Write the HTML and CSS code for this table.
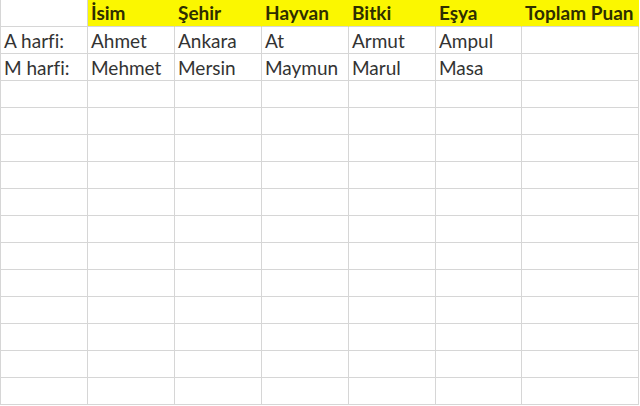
FILE: index.html
```html
<!DOCTYPE html>
<html lang="tr">
<head>
<meta charset="utf-8">
<link rel="stylesheet" href="styles.css">
</head>
<body>
<div class="sheet">
  <div class="cell"></div>
  <div class="cell head">İsim</div>
  <div class="cell head">Şehir</div>
  <div class="cell head">Hayvan</div>
  <div class="cell head">Bitki</div>
  <div class="cell head">Eşya</div>
  <div class="cell head">Toplam Puan</div>

  <div class="cell">A harfi:</div>
  <div class="cell">Ahmet</div>
  <div class="cell">Ankara</div>
  <div class="cell">At</div>
  <div class="cell">Armut</div>
  <div class="cell">Ampul</div>
  <div class="cell"></div>

  <div class="cell">M harfi:</div>
  <div class="cell">Mehmet</div>
  <div class="cell">Mersin</div>
  <div class="cell">Maymun</div>
  <div class="cell">Marul</div>
  <div class="cell">Masa</div>
  <div class="cell"></div>

  <div class="cell"></div><div class="cell"></div><div class="cell"></div><div class="cell"></div><div class="cell"></div><div class="cell"></div><div class="cell"></div>
  <div class="cell"></div><div class="cell"></div><div class="cell"></div><div class="cell"></div><div class="cell"></div><div class="cell"></div><div class="cell"></div>
  <div class="cell"></div><div class="cell"></div><div class="cell"></div><div class="cell"></div><div class="cell"></div><div class="cell"></div><div class="cell"></div>
  <div class="cell"></div><div class="cell"></div><div class="cell"></div><div class="cell"></div><div class="cell"></div><div class="cell"></div><div class="cell"></div>
  <div class="cell"></div><div class="cell"></div><div class="cell"></div><div class="cell"></div><div class="cell"></div><div class="cell"></div><div class="cell"></div>
  <div class="cell"></div><div class="cell"></div><div class="cell"></div><div class="cell"></div><div class="cell"></div><div class="cell"></div><div class="cell"></div>
  <div class="cell"></div><div class="cell"></div><div class="cell"></div><div class="cell"></div><div class="cell"></div><div class="cell"></div><div class="cell"></div>
  <div class="cell"></div><div class="cell"></div><div class="cell"></div><div class="cell"></div><div class="cell"></div><div class="cell"></div><div class="cell"></div>
  <div class="cell"></div><div class="cell"></div><div class="cell"></div><div class="cell"></div><div class="cell"></div><div class="cell"></div><div class="cell"></div>
  <div class="cell"></div><div class="cell"></div><div class="cell"></div><div class="cell"></div><div class="cell"></div><div class="cell"></div><div class="cell"></div>
  <div class="cell"></div><div class="cell"></div><div class="cell"></div><div class="cell"></div><div class="cell"></div><div class="cell"></div><div class="cell"></div>
  <div class="cell"></div><div class="cell"></div><div class="cell"></div><div class="cell"></div><div class="cell"></div><div class="cell"></div><div class="cell"></div>
</div>
</body>
</html>
```
FILE: styles.css
```css
html, body {
  margin: 0;
  padding: 0;
  background: #ffffff;
}
body {
  width: 640px;
  height: 406px;
  overflow: hidden;
}
.sheet {
  display: grid;
  grid-template-columns: 87px 87px 87px 87px 87px 86px 117px;
  grid-template-rows: 27px repeat(14, 27px);
  border-left: 1px solid #d6d6d6;
  width: 639px;
  font-family: Lato, "Open Sans", sans-serif;
  font-size: 19px;
  line-height: 19px;
  color: #333333;
}
.cell {
  border-right: 1px solid #d6d6d6;
  border-bottom: 1px solid #d6d6d6;
  padding: 0 3px 3px 3px;
  display: flex;
  align-items: flex-end;
  white-space: nowrap;
  overflow: hidden;
  box-sizing: border-box;
}
.head {
  background: #fbf700;
  font-weight: bold;
  color: #2e2e00;
  border-right-color: #fbf700;
  padding-bottom: 4px;
}
```
